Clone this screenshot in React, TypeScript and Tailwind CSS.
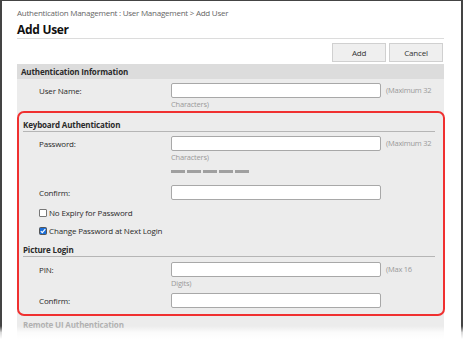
import React from 'react';

const labelCls = "pl-[22px] w-[154px] shrink-0 text-[8px] tracking-[-0.15px] leading-[15px] text-[#2a2a2a]";

function Field({ label, note }: { label: string; note?: string }) {
  return (
    <div className="flex items-start h-[15px]">
      <span className={labelCls}>{label}</span>
      <div className="w-[210px] h-[15px] bg-white border border-[#a8a8a8] rounded-[2px] shrink-0" />
      {note && (
        <span className="ml-[5px] text-[7.5px] tracking-[-0.25px] leading-[15px] text-[#9a9a9a] whitespace-nowrap">{note}</span>
      )}
    </div>
  );
}

function Wrap({ text }: { text: string }) {
  return (
    <div className="pl-[154px] h-[12px] text-[7.5px] tracking-[-0.2px] leading-[12px] text-[#9a9a9a]">{text}</div>
  );
}

function SubHeading({ title, className }: { title: string; className?: string }) {
  return (
    <div className={`ml-[6px] mr-[9px] h-[14px] border-b border-[#b5b5b5] text-[8px] tracking-[-0.15px] leading-[13px] font-bold text-[#2a2a2a] ${className ?? ''}`}>
      {title}
    </div>
  );
}

function Check({ label, checked, className }: { label: string; checked?: boolean; className?: string }) {
  return (
    <div className={`flex items-center h-[12px] pl-[22px] ${className ?? ''}`}>
      {checked ? (
        <svg width="8" height="8" viewBox="0 0 8 8" className="shrink-0">
          <rect x="0.5" y="0.5" width="7" height="7" rx="1" fill="#1c6fd8" stroke="#555" />
          <path d="M1.8 4.2 L3.3 5.7 L6.3 2.2" fill="none" stroke="#fff" strokeWidth="1.2" />
        </svg>
      ) : (
        <span className="w-[8px] h-[8px] bg-white border border-[#777] rounded-[1px] shrink-0" />
      )}
      <span className="ml-[2px] text-[8px] tracking-[-0.15px] leading-[12px] text-[#2a2a2a]">{label}</span>
    </div>
  );
}

export default function App() {
  return (
    <div className="relative w-[463px] h-[339px] overflow-hidden bg-white font-['Open_Sans',sans-serif]">
      <div className="h-full border-t border-x-2 border-[#444] pl-[15px]">
        <div className="w-[427px]">
          <div className="mt-[6px] h-[12px] text-[8px] tracking-[-0.25px] leading-[12px] text-[#666] whitespace-nowrap">
            Authentication Management : User Management &gt; Add User
          </div>
          <div className="mt-[3px] h-[17px] border-b border-[#dcdcdc] text-[12px] tracking-[-0.3px] leading-[16px] font-bold text-[#111]">
            Add User
          </div>
          <div className="mt-[4px] flex justify-end gap-[3px] pr-[1px]">
            <button className="w-[54px] h-[19px] bg-[#efefef] border border-[#d0d0d0] text-[8px] tracking-[-0.2px] text-[#333]">Add</button>
            <button className="w-[54px] h-[19px] bg-[#efefef] border border-[#d0d0d0] text-[8px] tracking-[-0.2px] text-[#333]">Cancel</button>
          </div>
          <div className="mt-[2px] bg-[#ececec] pb-[20px]">
            <div className="h-[15px] bg-[#dcdcdc] pl-[4px] text-[8px] tracking-[-0.15px] leading-[15px] font-bold text-[#2a2a2a]">
              Authentication Information
            </div>
            <div className="pt-[4px]">
              <Field label="User Name:" note="(Maximum 32" />
              <Wrap text="Characters)" />
            </div>
            <SubHeading title="Keyboard Authentication" className="mt-[8px]" />
            <div className="mt-[4px]">
              <Field label="Password:" note="(Maximum 32" />
              <Wrap text="Characters)" />
              <div className="mt-[7px] pl-[154px] flex gap-[2px]">
                {[0, 1, 2, 3, 4].map((i) => (
                  <div key={i} className="w-[14px] h-[3px] bg-[#a0a0a0]" />
                ))}
              </div>
            </div>
            <div className="mt-[12px]">
              <Field label="Confirm:" />
            </div>
            <Check label="No Expiry for Password" className="mt-[7px]" />
            <Check label="Change Password at Next Login" checked className="mt-[6px]" />
            <SubHeading title="Picture Login" className="mt-[6px]" />
            <div className="mt-[5px]">
              <Field label="PIN:" note="(Max 16" />
              <Wrap text="Digits)" />
            </div>
            <div className="mt-[4px]">
              <Field label="Confirm:" />
            </div>
            <div className="mt-[11px] ml-[6px] h-[12px] text-[8px] tracking-[-0.15px] leading-[12px] font-bold text-[#b0b0b0]">
              Remote UI Authentication
            </div>
          </div>
        </div>
      </div>
      <div className="absolute left-[17px] top-[111px] w-[428px] h-[205px] border-2 border-[#f03030] rounded-[7px] pointer-events-none" />
      <div className="absolute left-0 right-0 bottom-0 h-[13px] bg-gradient-to-b from-white/0 via-white/80 to-white pointer-events-none" />
    </div>
  );
}
